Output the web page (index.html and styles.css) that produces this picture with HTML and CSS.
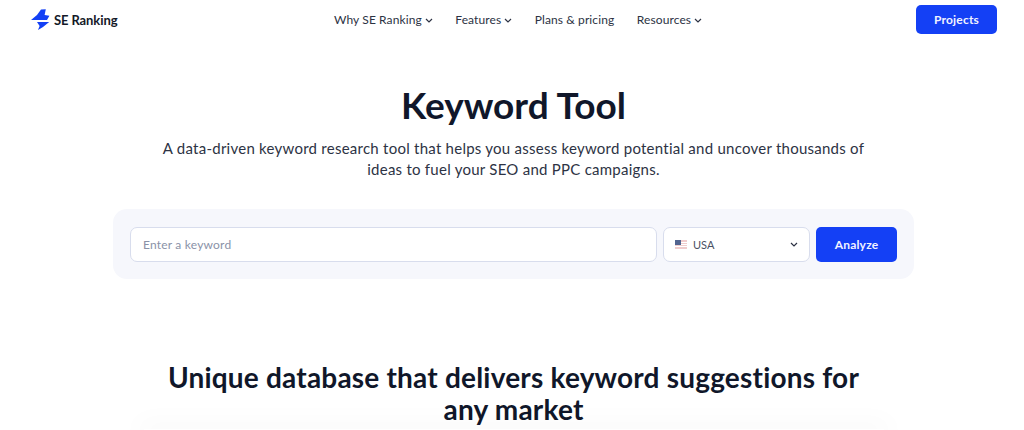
FILE: index.html
```html
<!DOCTYPE html>
<html lang="en">
<head>
<meta charset="utf-8">
<title>Keyword Tool</title>
<link rel="stylesheet" href="styles.css">
</head>
<body>
<header class="topbar">
  <a class="logo" href="#">
    <svg class="logo-mark" width="19" height="21" viewBox="0 0 19 21"><path fill="#1440f5" d="M10 .5 14.8.3 13.6 6 18.4 6.8 16 11 0 11 6 6Z"/><path fill="#1440f5" d="M6 13 18.2 13 12 18 7 21 8.6 17Z"/></svg>
    <span>SE Ranking</span>
  </a>
  <nav class="nav">
    <a href="#">Why SE Ranking <svg class="caret" viewBox="0 0 8 5"><path d="M1 1l3 3 3-3"/></svg></a>
    <a href="#">Features <svg class="caret" viewBox="0 0 8 5"><path d="M1 1l3 3 3-3"/></svg></a>
    <a href="#">Plans &amp; pricing</a>
    <a href="#">Resources <svg class="caret" viewBox="0 0 8 5"><path d="M1 1l3 3 3-3"/></svg></a>
  </nav>
  <a class="btn btn-projects" href="#">Projects</a>
</header>
<main>
  <section class="hero">
    <h1>Keyword Tool</h1>
    <p>A data-driven keyword research tool that helps you assess keyword potential and uncover thousands of ideas to fuel your SEO and PPC campaigns.</p>
    <form class="search">
      <div class="field keyword">Enter a keyword</div>
      <div class="field country">
        <svg class="flag" width="12" height="9" viewBox="0 0 12 9"><rect width="12" height="9" fill="#f0cccc"/><rect y="2" width="12" height="1" fill="#fff"/><rect y="4" width="12" height="1" fill="#fff"/><rect y="6" width="12" height="1" fill="#fff"/><rect width="6" height="5" fill="#52648f"/></svg>
        <span>USA</span>
        <svg class="select-caret" viewBox="0 0 8 5"><path d="M1 1l3 3 3-3"/></svg>
      </div>
      <a class="btn btn-analyze" href="#">Analyze</a>
    </form>
  </section>
  <section class="market">
    <h2>Unique database that delivers keyword suggestions for any market</h2>
    <div class="market-card"></div>
  </section>
</main>
</body>
</html>
```
FILE: styles.css
```css
* { box-sizing: border-box; }
html, body { margin: 0; height: 430px; overflow: hidden; }
body {
  background: #fff;
  color: #0f1524;
  font-family: Lato, "Noto Sans", sans-serif;
}
a { color: inherit; text-decoration: none; }

.topbar {
  display: flex;
  align-items: center;
  height: 39px;
  padding: 0 27px 0 31px;
}
.logo {
  display: flex;
  align-items: center;
  gap: 4px;
  width: 303px;
  font-size: 13px;
  font-weight: 700;
  letter-spacing: -0.1px;
  color: #141928;
}
.logo-mark { flex: none; }
.nav {
  display: flex;
  gap: 22.5px;
  font-size: 12px;
  letter-spacing: 0.1px;
  color: #2c3243;
}
.nav a { display: flex; align-items: center; gap: 3px; }
.caret { width: 8px; height: 5px; margin-top: 1px; }
.caret path, .select-caret path {
  fill: none;
  stroke: #2c3243;
  stroke-width: 1.2;
}
.btn {
  display: flex;
  align-items: center;
  justify-content: center;
  background: #1440f5;
  color: #f1f3ff;
  border-radius: 5px;
  font-size: 12px;
  font-weight: 700;
  letter-spacing: 0.2px;
}
.btn-projects { width: 81px; height: 29px; margin: 0 0 0 auto; }

.hero {
  display: flex;
  flex-direction: column;
  align-items: center;
  padding-left: 3px;
  text-align: center;
}
h1 {
  margin: 44px 0 0;
  font-size: 37px;
  line-height: 44px;
  font-weight: 700;
  color: #10172a;
}
.hero p {
  width: 720px;
  margin: 11px 0 0;
  font-size: 15px;
  line-height: 21px;
  letter-spacing: 0.25px;
  color: #2d3344;
}
.search {
  display: flex;
  gap: 6px;
  width: 801px;
  height: 70px;
  margin: 29px 0 0;
  padding: 18px 17px 17px;
  background: #f6f7fc;
  border-radius: 14px;
}
.field {
  display: flex;
  align-items: center;
  height: 35px;
  background: #fff;
  border: 1px solid #d8dded;
  border-radius: 7px;
  font-size: 11px;
}
.keyword {
  width: 527px;
  padding-left: 12px;
  color: #8a92a8;
  font-size: 12px;
  letter-spacing: 0.2px;
}
.country { width: 147px; padding: 0 11px; color: #4a5063; }
.flag { margin-right: 6px; }
.select-caret { width: 8px; height: 5px; margin-left: auto; }
.btn-analyze { width: 81px; height: 35px; }

.market {
  display: flex;
  flex-direction: column;
  align-items: center;
  margin-top: 82px;
  padding-left: 3px;
  text-align: center;
}
h2 {
  width: 720px;
  margin: 0;
  font-size: 28px;
  line-height: 32px;
  font-weight: 700;
  letter-spacing: 0.2px;
  color: #10172a;
}
.market-card {
  width: 740px;
  height: 1px;
  margin-top: 4px;
  box-shadow: 0 0 26px 6px rgba(20, 30, 60, 0.035);
}
```
